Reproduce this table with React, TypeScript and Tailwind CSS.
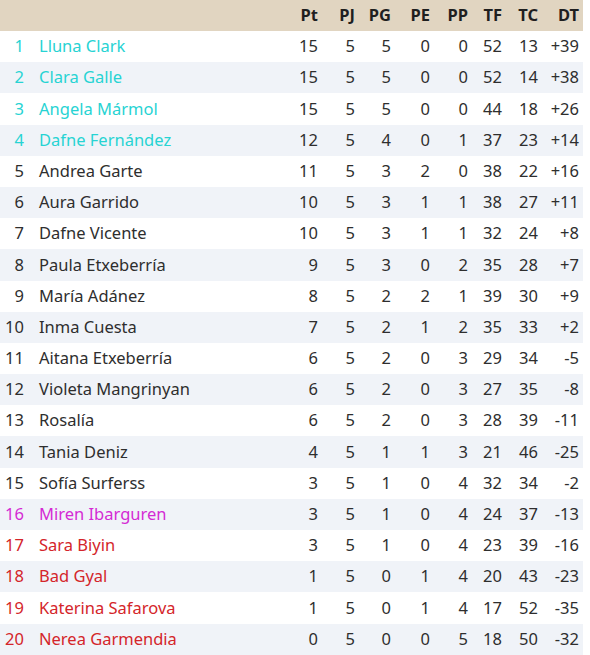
const rows: [string, number[], "cyan" | "pink" | "red" | ""][] = [
  ["Lluna Clark", [15, 5, 5, 0, 0, 52, 13], "cyan"],
  ["Clara Galle", [15, 5, 5, 0, 0, 52, 14], "cyan"],
  ["Angela Mármol", [15, 5, 5, 0, 0, 44, 18], "cyan"],
  ["Dafne Fernández", [12, 5, 4, 0, 1, 37, 23], "cyan"],
  ["Andrea Garte", [11, 5, 3, 2, 0, 38, 22], ""],
  ["Aura Garrido", [10, 5, 3, 1, 1, 38, 27], ""],
  ["Dafne Vicente", [10, 5, 3, 1, 1, 32, 24], ""],
  ["Paula Etxeberría", [9, 5, 3, 0, 2, 35, 28], ""],
  ["María Adánez", [8, 5, 2, 2, 1, 39, 30], ""],
  ["Inma Cuesta", [7, 5, 2, 1, 2, 35, 33], ""],
  ["Aitana Etxeberría", [6, 5, 2, 0, 3, 29, 34], ""],
  ["Violeta Mangrinyan", [6, 5, 2, 0, 3, 27, 35], ""],
  ["Rosalía", [6, 5, 2, 0, 3, 28, 39], ""],
  ["Tania Deniz", [4, 5, 1, 1, 3, 21, 46], ""],
  ["Sofía Surferss", [3, 5, 1, 0, 4, 32, 34], ""],
  ["Miren Ibarguren", [3, 5, 1, 0, 4, 24, 37], "pink"],
  ["Sara Biyin", [3, 5, 1, 0, 4, 23, 39], "red"],
  ["Bad Gyal", [1, 5, 0, 1, 4, 20, 43], "red"],
  ["Katerina Safarova", [1, 5, 0, 1, 4, 17, 52], "red"],
  ["Nerea Garmendia", [0, 5, 0, 0, 5, 18, 50], "red"],
];

const cols = ["Pt", "PJ", "PG", "PE", "PP", "TF", "TC", "DT"];
const widths = ["w-[37px]", "w-[37px]", "w-[36px]", "w-[39px]", "w-[38px]", "w-[34px]", "w-[36px]", "w-[41px]"];

const zoneColor = {
  cyan: "text-[#27d3d3]",
  pink: "text-[#d42ad4]",
  red: "text-[#d4252a]",
  "": "text-[#2e2e2e]",
};

export default function App() {
  return (
    <div className="w-[583px] bg-white text-[16.5px] text-[#2e2e2e]" style={{ fontFamily: '"Noto Sans", "Open Sans", sans-serif' }}>
      <div className="flex h-[31px] items-center bg-[#e1d5c1] font-bold text-[#1f1f1f]">
        <div className="w-[28px]" />
        <div className="flex-1" />
        {cols.map((c, i) => (
          <div key={c} className={`${widths[i]} pr-[4px] text-right`}>{c}</div>
        ))}
      </div>
      {rows.map(([name, vals, zone], i) => {
        const dt = vals[5] - vals[6];
        const cells = [...vals.map(String), dt > 0 ? `+${dt}` : String(dt)];
        return (
          <div key={name} className={`flex h-[31.2px] items-center ${i % 2 === 1 ? "bg-[#f0f3f8]" : "bg-white"}`}>
            <div className={`w-[28px] pr-[4px] text-right ${zoneColor[zone]}`}>{i + 1}</div>
            <div className={`flex-1 pl-[11px] truncate ${zoneColor[zone]}`}>{name}</div>
            {cells.map((v, j) => (
              <div key={j} className={`${widths[j]} pr-[4px] text-right`}>{v}</div>
            ))}
          </div>
        );
      })}
    </div>
  );
}
